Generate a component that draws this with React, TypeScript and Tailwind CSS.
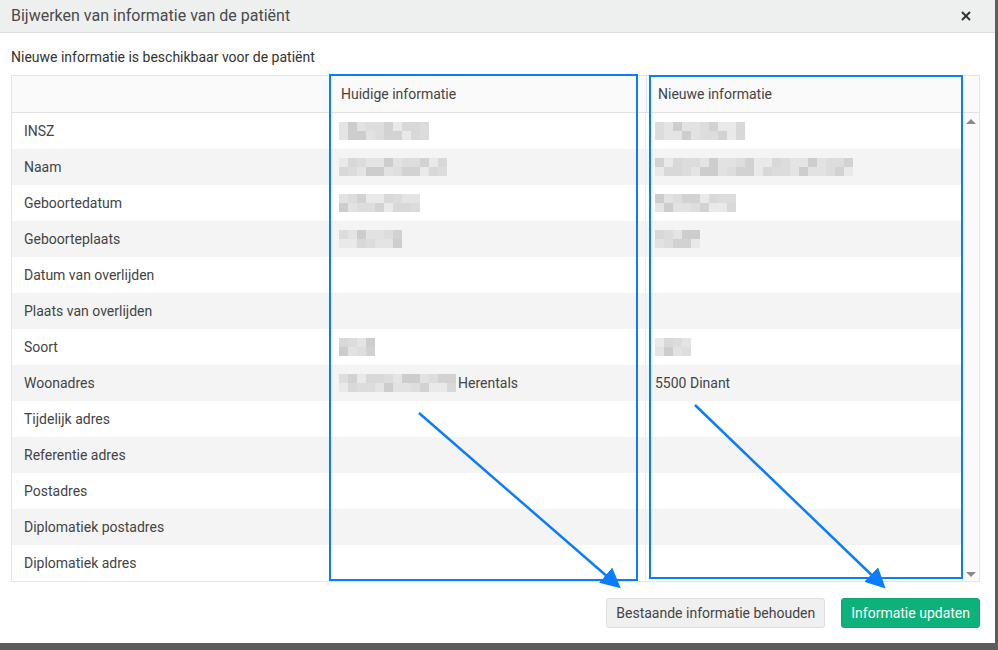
import { X } from "lucide-react";

type Row = {
  label: string;
  current?: number[];
  currentText?: string;
  next?: number[];
  nextText?: string;
};

// blurred values are drawn as a small mosaic, numbers are tile counts
const rows: Row[] = [
  { label: "INSZ", current: [10], next: [10] },
  { label: "Naam", current: [12], next: [22] },
  { label: "Geboortedatum", current: [9], next: [9] },
  { label: "Geboorteplaats", current: [7], next: [5] },
  { label: "Datum van overlijden" },
  { label: "Plaats van overlijden" },
  { label: "Soort", current: [4], next: [4] },
  { label: "Woonadres", current: [13], currentText: "Herentals", nextText: "5500 Dinant" },
  { label: "Tijdelijk adres" },
  { label: "Referentie adres" },
  { label: "Postadres" },
  { label: "Diplomatiek postadres" },
  { label: "Diplomatiek adres" },
];

const shades = ["#e4e4e4", "#dcdcdc", "#d8d8d8", "#e9e9e9", "#d2d2d2", "#dddddd", "#e2e2e2", "#cdcdcd"];

function Mosaic({ tiles, seed }: { tiles: number; seed: number }) {
  const cells = Array.from({ length: tiles * 2 }, (_, i) => shades[(i * 7 + seed * 3 + (i >> 2)) % shades.length]);
  return (
    <div className="grid grid-rows-2 gap-0" style={{ gridTemplateColumns: `repeat(${tiles}, 9px)` }}>
      {cells.map((c, i) => (
        <div key={i} className="h-[9px]" style={{ backgroundColor: c }} />
      ))}
    </div>
  );
}

function Cell({ tiles, text, seed }: { tiles?: number[]; text?: string; seed: number }) {
  return (
    <div className="flex items-center pl-[9px] h-full">
      {tiles && <Mosaic tiles={tiles[0]} seed={seed} />}
      {text && <span className={tiles ? "ml-[2px]" : ""}>{text}</span>}
    </div>
  );
}

export default function App() {
  return (
    <div
      className="relative w-[998px] h-[650px] bg-[#5c5c5c] overflow-hidden text-[14px] text-[#444]"
      style={{ fontFamily: "Roboto, 'Liberation Sans', sans-serif" }}
    >
      <div className="w-[995px] h-[643px] bg-white flex flex-col">
        {/* Header */}
        <div className="h-[33px] bg-[#edf0ef] border-b border-[#dcdcdc] flex items-center justify-between pl-[11px] pr-[22px]">
          <h3 className="text-[16px] text-[#4a4a4a]">Bijwerken van informatie van de patiënt</h3>
          <X className="w-[14px] h-[14px] text-[#333]" strokeWidth={3.2} />
        </div>

        {/* Content */}
        <div className="px-[11px] pt-[14px]">
          <p className="text-[14px] text-[#333] leading-[20px]">Nieuwe informatie is beschikbaar voor de patiënt</p>

          <div className="mt-[8px] w-[969px] border border-[#e4e4e4] flex">
            <div className="flex-1">
              <div className="grid grid-cols-[318px_316px_316px] h-[37px] bg-[#fafafa] border-b border-[#e2e2e2]">
                <div />
                <div className="flex items-center pl-[11px] text-[#444]">Huidige informatie</div>
                <div className="flex items-center pl-[11px] border-l border-[#e6e6e6] text-[#444]">Nieuwe informatie</div>
              </div>
              {rows.map((r, i) => (
                <div
                  key={r.label}
                  className={`grid grid-cols-[318px_316px_316px] h-[36px] leading-[18px] pb-px ${i % 2 === 1 ? "bg-[#f4f4f4]" : "bg-white"}`}
                >
                  <div className="flex items-center pl-[12px] text-[#444]">{r.label}</div>
                  <Cell tiles={r.current} text={r.currentText} seed={i} />
                  <div className="border-l border-[#ececec] -ml-px">
                    <Cell tiles={r.next} text={r.nextText} seed={i + 3} />
                  </div>
                </div>
              ))}
            </div>
            {/* Scrollbar */}
            <div className="w-[17px] bg-[#fafafa] border-l border-[#e4e4e4] flex flex-col">
              <div className="h-[37px] border-b border-[#e2e2e2]" />
              <div className="flex-1 flex flex-col items-center justify-between pt-[6px] pb-[4px]">
                <div className="w-0 h-0 border-l-[5px] border-r-[5px] border-b-[5px] border-l-transparent border-r-transparent border-b-[#8a8a8a]" />
                <div className="w-0 h-0 border-l-[5px] border-r-[5px] border-t-[5px] border-l-transparent border-r-transparent border-t-[#8a8a8a]" />
              </div>
            </div>
          </div>

          {/* Footer */}
          <div className="flex justify-end gap-[16px] mt-[16px] pr-[4px]">
            <button className="h-[30px] px-[9px] bg-[#f0f0f0] border border-[#dedede] rounded-[3px] text-[14px] text-[#444]">
              Bestaande informatie behouden
            </button>
            <button className="h-[30px] px-[9px] bg-[#0db27a] border border-[#0aa871] rounded-[3px] text-[14px] text-white">
              Informatie updaten
            </button>
          </div>
        </div>
      </div>

      {/* Annotations drawn over the screenshot */}
      <svg className="absolute inset-0 pointer-events-none" width="998" height="650">
        <defs>
          <marker id="head" markerWidth="8" markerHeight="8" refX="6" refY="4" orient="auto" markerUnits="strokeWidth">
            <path d="M0,0 L8,4 L0,8 z" fill="#0a7cff" />
          </marker>
        </defs>
        <rect x="330" y="75" width="307" height="505" fill="none" stroke="#0a7cff" strokeWidth="2" />
        <rect x="650" y="76" width="312" height="502" fill="none" stroke="#0a7cff" strokeWidth="2" />
        <line x1="419" y1="413" x2="617" y2="585" stroke="#0a7cff" strokeWidth="2.5" markerEnd="url(#head)" />
        <line x1="695" y1="405" x2="882" y2="585" stroke="#0a7cff" strokeWidth="2.5" markerEnd="url(#head)" />
      </svg>
    </div>
  );
}
